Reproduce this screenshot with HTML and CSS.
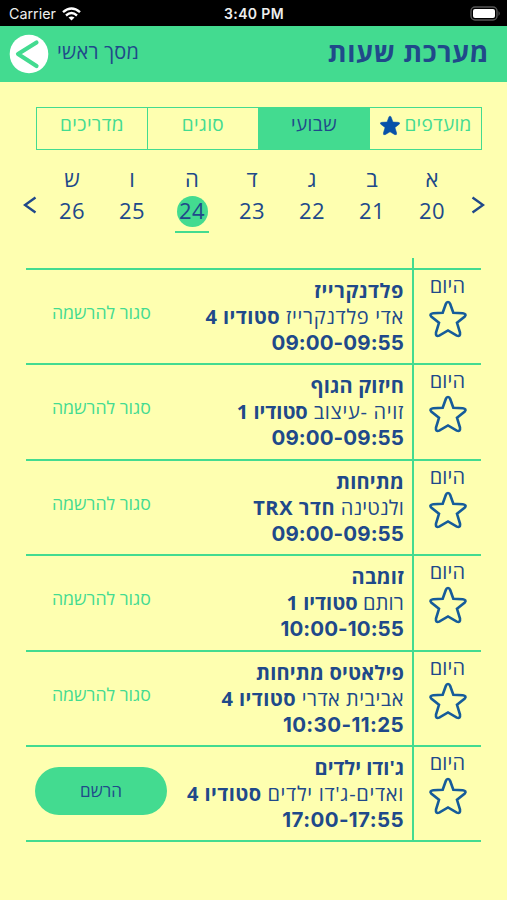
FILE: index.html
```html
<!DOCTYPE html>
<html lang="he" dir="rtl">
<head>
<meta charset="utf-8">
<title>מערכת שעות</title>
<link rel="stylesheet" href="styles.css">
</head>
<body>
<svg class="defs" width="0" height="0" aria-hidden="true">
  <symbol id="star" viewBox="0 0 40 38"><path d="M20 2Q21.500 2 22.200 4L25.300 12.800L34.800 13.200Q39 13.800 36.800 16.500L29 22.800L32 32.600Q32.600 37 28.800 35.600L20 30.500L11.200 35.600Q7.400 37 8 32.600L11 22.800L3.200 16.500Q1 13.800 5.200 13.200L14.700 12.800L17.800 4Q18.500 2 20 2Z"/></symbol>
</svg>
<div class="status" dir="ltr">
  <div class="carrier">Carrier
    <svg width="19" height="14" viewBox="0 0 19 14"><g fill="none" stroke="#fff" stroke-width="2.400"><path d="M1 5.200Q9.500-2.400 18 5.200"/><path d="M4 8.500Q9.500 3.700 15 8.500"/></g><path d="M6.500 10.600Q9.500 8.200 12.500 10.600L9.500 13.600Z" fill="#fff"/></svg>
  </div>
  <div class="clock">3:40 PM</div>
  <svg class="battery" width="31" height="15" viewBox="0 0 31 15"><rect x="1" y="1" width="26" height="13" rx="4" fill="none" stroke="#555" stroke-width="1.400"/><rect x="3" y="3" width="22" height="9" rx="2" fill="#fff"/><path d="M28.500 5Q31 7.500 28.500 10Z" fill="#555"/></svg>
</div>
<header class="header">
  <h1 class="title">מערכת שעות</h1>
  <div class="back"><span class="back-text">מסך ראשי</span>
    <svg width="40" height="40" viewBox="0 0 40 40"><circle cx="20" cy="20" r="19.300" fill="#fff"/><path d="M27.500 8.500L9 20L27.500 32" fill="none" stroke="#43db90" stroke-width="4.200" stroke-linecap="round" stroke-linejoin="round"/></svg>
  </div>
</header>
<nav class="tabs">
  <div class="tab fav"><span>מועדפים</span><svg class="solid" width="22" height="21"><use href="#star"/></svg></div>
  <div class="tab active">שבועי</div>
  <div class="tab">סוגים</div>
  <div class="tab">מדריכים</div>
</nav>
<div class="week">
  <svg class="arrow" width="14" height="18" viewBox="0 0 14 18"><path d="M1.500 1.500L12 9L1.500 16.500"/></svg>
  <div class="days">
    <div class="day"><span>א</span><b>20</b></div>
    <div class="day"><span>ב</span><b>21</b></div>
    <div class="day"><span>ג</span><b>22</b></div>
    <div class="day"><span>ד</span><b>23</b></div>
    <div class="day on"><span>ה</span><b>24</b></div>
    <div class="day"><span>ו</span><b>25</b></div>
    <div class="day"><span>ש</span><b>26</b></div>
  </div>
  <svg class="arrow" width="14" height="18" viewBox="0 0 14 18"><path d="M12.500 1.500L2 9L12.500 16.500"/></svg>
</div>
<main class="list">
  <div class="stub"></div>
  <section class="row">
    <div class="mark"><span>היום</span><svg width="40" height="38"><use href="#star"/></svg></div>
    <div class="info"><b class="loose">פלדנקרייז</b><span class="wide">אדי פלדנקרייז <b>סטודיו 4</b></span><b class="time" dir="ltr">09:00-09:55</b></div>
    <div class="action closed">סגור להרשמה</div>
  </section>
  <section class="row">
    <div class="mark"><span>היום</span><svg width="40" height="38"><use href="#star"/></svg></div>
    <div class="info"><b>חיזוק הגוף</b><span class="wide">זויה -עיצוב <b class="tight">סטודיו 1</b></span><b class="time" dir="ltr">09:00-09:55</b></div>
    <div class="action closed">סגור להרשמה</div>
  </section>
  <section class="row">
    <div class="mark"><span>היום</span><svg width="40" height="38"><use href="#star"/></svg></div>
    <div class="info"><b>מתיחות</b><span>ולנטינה <b class="loose">חדר TRX</b></span><b class="time" dir="ltr">09:00-09:55</b></div>
    <div class="action closed">סגור להרשמה</div>
  </section>
  <section class="row">
    <div class="mark"><span>היום</span><svg width="40" height="38"><use href="#star"/></svg></div>
    <div class="info"><b>זומבה</b><span>רותם <b class="tight">סטודיו 1</b></span><b class="time" dir="ltr">10:00-10:55</b></div>
    <div class="action closed">סגור להרשמה</div>
  </section>
  <section class="row">
    <div class="mark"><span>היום</span><svg width="40" height="38"><use href="#star"/></svg></div>
    <div class="info"><b>פילאטיס מתיחות</b><span class="medium">אביבית אדרי <b>סטודיו 4</b></span><b class="time narrow" dir="ltr">10:30-11:25</b></div>
    <div class="action closed">סגור להרשמה</div>
  </section>
  <section class="row">
    <div class="mark"><span>היום</span><svg width="40" height="38"><use href="#star"/></svg></div>
    <div class="info"><b class="close">ג'ודו ילדים</b><span class="wide">ואדים-ג'דו ילדים <b>סטודיו 4</b></span><b class="time narrow" dir="ltr">17:00-17:55</b></div>
    <div class="action"><button class="join">הרשם</button></div>
  </section>
</main>
</body>
</html>
```
FILE: styles.css
```css
* { box-sizing: border-box; }
body { margin: 0; height: 900px; overflow: hidden; background: #feffb0; color: #20498a; font-family: "Open Sans", "Noto Sans", sans-serif; }
.defs { display: block; position: absolute; }
svg { display: block; flex: none; }
.status { display: grid; grid-template-columns: 1fr auto 1fr; align-items: center; height: 26px; padding: 1px 6px 0 9px; background: #000; color: #eee; font: 14.3px/25px Inter, sans-serif; }
.carrier { display: flex; align-items: center; gap: 6px; }
.clock { font-weight: 600; font-size: 14px; letter-spacing: .35px; margin-right: 2px; }
.battery { justify-self: end; }
.header { display: flex; justify-content: space-between; height: 56px; padding: 0 18px 0 9px; background: #43db90; }
.title { margin: 0; font-size: 27px; line-height: 52px; font-weight: 700; letter-spacing: .6px; }
.back { display: flex; gap: 8px; padding-top: 8px; font-size: 20px; line-height: 36px; letter-spacing: .25px; }
.tabs { display: grid; grid-template-columns: repeat(4, 1fr); width: 446px; height: 43px; margin: 25px 25px 0 36px; border: 1.5px solid #43db90; color: #43db90; font-size: 19px; line-height: 33px; letter-spacing: .4px; text-align: center; }
.tab + .tab { border-right: 1px solid #43db90; }
.active { background: #43db90; color: #20498a; }
.fav { display: flex; justify-content: center; gap: 3px; letter-spacing: .3px; }
.solid { margin-top: 7px; fill: #0751a9; stroke: #0751a9; }
.week { display: flex; align-items: flex-start; justify-content: space-between; height: 83px; padding: 0 22px 0 23px; margin-top: 16px; }
.arrow { margin-top: 30px; fill: none; stroke: #20498a; stroke-width: 2.4; }
.days { display: grid; grid-template-columns: repeat(7, 60px); margin: 0 2px 0 -2px; }
.day { display: flex; flex-direction: column; align-items: center; font-size: 22px; }
.day span { height: 30px; line-height: 25px; }
.day b { height: 31px; line-height: 29px; font-weight: 400; letter-spacing: .5px; }
.on b { width: 31px; border-radius: 50%; background: #43db90; text-align: center; }
.on::after { content: ""; width: 34px; height: 1.5px; margin-top: 4px; background: #43db90; }
.list { margin: 9px 26px 0; }
.stub { height: 9.5px; width: 69px; border-left: 2px solid #43db90; }
.row { display: flex; height: 95.5px; border-top: 2px solid #43db90; }
.row:last-child { height: 97px; border-bottom: 2px solid #43db90; }
.mark { width: 69px; border-left: 2px solid #43db90; display: flex; flex-direction: column; align-items: center; font-size: 20px; letter-spacing: .2px; }
.mark span { line-height: 32px; height: 30px; }
.mark svg { fill: none; stroke: #165c9a; stroke-width: 2.6; }
.info { flex: 1; display: flex; flex-direction: column; align-items: flex-start; padding: 8px 8px 0 0; font-size: 20px; line-height: 26px; white-space: nowrap; }
.info > * { height: 26px; letter-spacing: .2px; }
.info > .wide { letter-spacing: .7px; }
.info > .medium { letter-spacing: .5px; }
.info span b { letter-spacing: .45px; }
.info span .tight { letter-spacing: 0; }
.info .loose { letter-spacing: .6px; }
.info .close { letter-spacing: 0; }
.info .time { font-family: Inter, sans-serif; font-size: 20.5px; letter-spacing: .1px; }
.info .narrow { letter-spacing: .4px; }
.action { width: 150px; padding: 0 9px 0 0; }
.closed { padding: 27px 0 0 26px; color: #43db90; font-size: 17.7px; line-height: 30px; text-align: left; }
.join { display: block; width: 132px; height: 48px; margin: 20px 0 0; padding: 0; border: 0; border-radius: 24px; background: #43db90; color: #20498a; font: 17px/48px "Open Sans", sans-serif; }
```
